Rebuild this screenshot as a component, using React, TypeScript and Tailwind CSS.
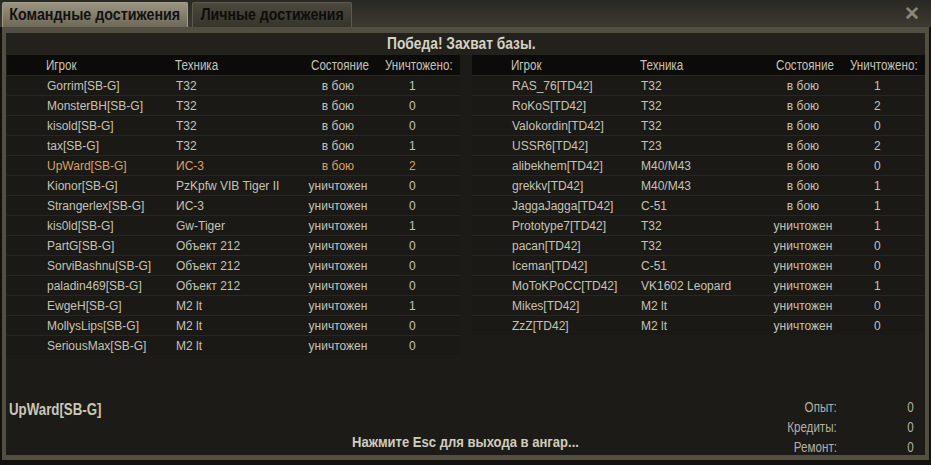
import React from 'react'

type Row = { name: string; tank: string; alive: boolean; kills: number; me?: boolean }

const teamLeft: Row[] = [
  { name: 'Gorrim[SB-G]', tank: 'T32', alive: true, kills: 1 },
  { name: 'MonsterBH[SB-G]', tank: 'T32', alive: true, kills: 0 },
  { name: 'kisold[SB-G]', tank: 'T32', alive: true, kills: 0 },
  { name: 'tax[SB-G]', tank: 'T32', alive: true, kills: 1 },
  { name: 'UpWard[SB-G]', tank: 'ИС-3', alive: true, kills: 2, me: true },
  { name: 'Kionor[SB-G]', tank: 'PzKpfw VIB Tiger II', alive: false, kills: 0 },
  { name: 'Strangerlex[SB-G]', tank: 'ИС-3', alive: false, kills: 0 },
  { name: 'kis0ld[SB-G]', tank: 'Gw-Tiger', alive: false, kills: 1 },
  { name: 'PartG[SB-G]', tank: 'Объект 212', alive: false, kills: 0 },
  { name: 'SorviBashnu[SB-G]', tank: 'Объект 212', alive: false, kills: 0 },
  { name: 'paladin469[SB-G]', tank: 'Объект 212', alive: false, kills: 0 },
  { name: 'EwgeH[SB-G]', tank: 'M2 lt', alive: false, kills: 1 },
  { name: 'MollysLips[SB-G]', tank: 'M2 lt', alive: false, kills: 0 },
  { name: 'SeriousMax[SB-G]', tank: 'M2 lt', alive: false, kills: 0 },
]

const teamRight: Row[] = [
  { name: 'RAS_76[TD42]', tank: 'T32', alive: true, kills: 1 },
  { name: 'RoKoS[TD42]', tank: 'T32', alive: true, kills: 2 },
  { name: 'Valokordin[TD42]', tank: 'T32', alive: true, kills: 0 },
  { name: 'USSR6[TD42]', tank: 'T23', alive: true, kills: 2 },
  { name: 'alibekhem[TD42]', tank: 'M40/M43', alive: true, kills: 0 },
  { name: 'grekkv[TD42]', tank: 'M40/M43', alive: true, kills: 1 },
  { name: 'JaggaJagga[TD42]', tank: 'С-51', alive: true, kills: 1 },
  { name: 'Prototype7[TD42]', tank: 'T32', alive: false, kills: 1 },
  { name: 'pacan[TD42]', tank: 'T32', alive: false, kills: 0 },
  { name: 'Iceman[TD42]', tank: 'С-51', alive: false, kills: 0 },
  { name: 'MoToKPoCC[TD42]', tank: 'VK1602 Leopard', alive: false, kills: 1 },
  { name: 'Mikes[TD42]', tank: 'M2 lt', alive: false, kills: 0 },
  { name: 'ZzZ[TD42]', tank: 'M2 lt', alive: false, kills: 0 },
]

// no narrow font installed, so squeeze Liberation Sans horizontally
function N({ children, className = 'origin-left' }: { children: React.ReactNode; className?: string }) {
  return <span className={`inline-block scale-x-[0.83] whitespace-nowrap ${className}`}>{children}</span>
}

function Team({ rows }: { rows: Row[] }) {
  return (
    <div className="w-[453px]">
      <div className="flex h-[20px] items-center bg-[#0c0b09] text-[14px] text-[#c6c3b4]">
        <div className="w-[168px] pl-[39px]"><N>Игрок</N></div>
        <div className="w-[135px]"><N>Техника</N></div>
        <div className="w-[56px] pl-[1px]"><N>Состояние</N></div>
        <div className="w-[94px] pl-[19px]"><N>Уничтожено:</N></div>
      </div>
      {rows.map(r => (
        <div
          key={r.name}
          className={`flex h-[20px] items-center border-t border-[#272620] bg-[#1a1915] text-[12px] ${r.me ? 'text-[#d9a35e]' : 'text-[#c6c3b5]'}`}
        >
          <div className="w-[168px] pl-[40px] whitespace-nowrap">{r.name}</div>
          <div className="w-[135px] pl-[1px] whitespace-nowrap">{r.tank}</div>
          <div className="w-[56px] flex justify-center whitespace-nowrap">{r.alive ? 'в бою' : 'уничтожен'}</div>
          <div className="w-[94px] pl-[43px]">{r.kills}</div>
        </div>
      ))}
    </div>
  )
}

export default function App() {
  return (
    <div className="w-[931px] h-[465px] bg-[#12110e] px-[2px] pb-[5px] flex flex-col font-['Liberation_Sans',Arial,sans-serif] overflow-hidden">
      {/* tabs */}
      <div className="h-[27px] flex items-end bg-gradient-to-b from-[#2a2823] to-[#3d3a31] -mx-[2px] pl-[2px]">
        <div className="h-[25px] w-[186px] flex items-center justify-center rounded-t-[2px] border border-b-0 border-[#a29c88] bg-gradient-to-b from-[#9a9481] to-[#6d6858] text-[17px] font-bold text-[#121110]">
          <N className="origin-center scale-x-[0.84]">Командные достижения</N>
        </div>
        <div className="ml-[4px] h-[25px] w-[160px] flex items-center justify-center rounded-t-[2px] border border-b-0 border-[#5e5a4d] bg-gradient-to-b from-[#4b483e] to-[#37342c] text-[17px] font-bold text-[#0e0d0b]">
          <N className="origin-center">Личные достижения</N>
        </div>
        <div className="flex-1 h-full flex items-center justify-end pr-[11px]">
          <span className="text-[19px] font-bold leading-none text-[#8a877a]">✕</span>
        </div>
      </div>

      {/* frame */}
      <div className="flex-1 flex flex-col border-x-[4px] border-t-[6px] border-b-[5px] border-[#524e42] bg-[#1d1b17]">
        <div className="h-[22px] flex items-center justify-center pr-[8px] bg-[#23211c] text-[16px] font-bold text-[#d6d3c4]">
          <N className="origin-center scale-x-[0.86]">Победа! Захват базы.</N>
        </div>
        <div className="flex gap-[12px] pl-[1px]">
          <Team rows={teamLeft} />
          <Team rows={teamRight} />
        </div>

        <div className="mt-auto h-[62px] grid grid-cols-[1fr_auto_1fr]">
          <div className="pl-[3px] pt-[5px] text-[16px] font-bold text-[#c9c6b8]"><N>UpWard[SB-G]</N></div>
          <div className="pt-[38px] text-[15px] font-bold text-[#cfccbe]"><N className="origin-center scale-x-[0.87]">Нажмите Esc для выхода в ангар...</N></div>
          <div className="flex justify-end pr-[11px] pt-[4px] text-[14px] leading-[20px] text-[#b3b0a2]">
            <div className="text-right">
              <div><N className="origin-right">Опыт:</N></div>
              <div><N className="origin-right">Кредиты:</N></div>
              <div><N className="origin-right">Ремонт:</N></div>
            </div>
            <div className="w-[77px] text-right">
              <div><N className="origin-right">0</N></div>
              <div><N className="origin-right">0</N></div>
              <div><N className="origin-right">0</N></div>
            </div>
          </div>
        </div>
      </div>
    </div>
  )
}
